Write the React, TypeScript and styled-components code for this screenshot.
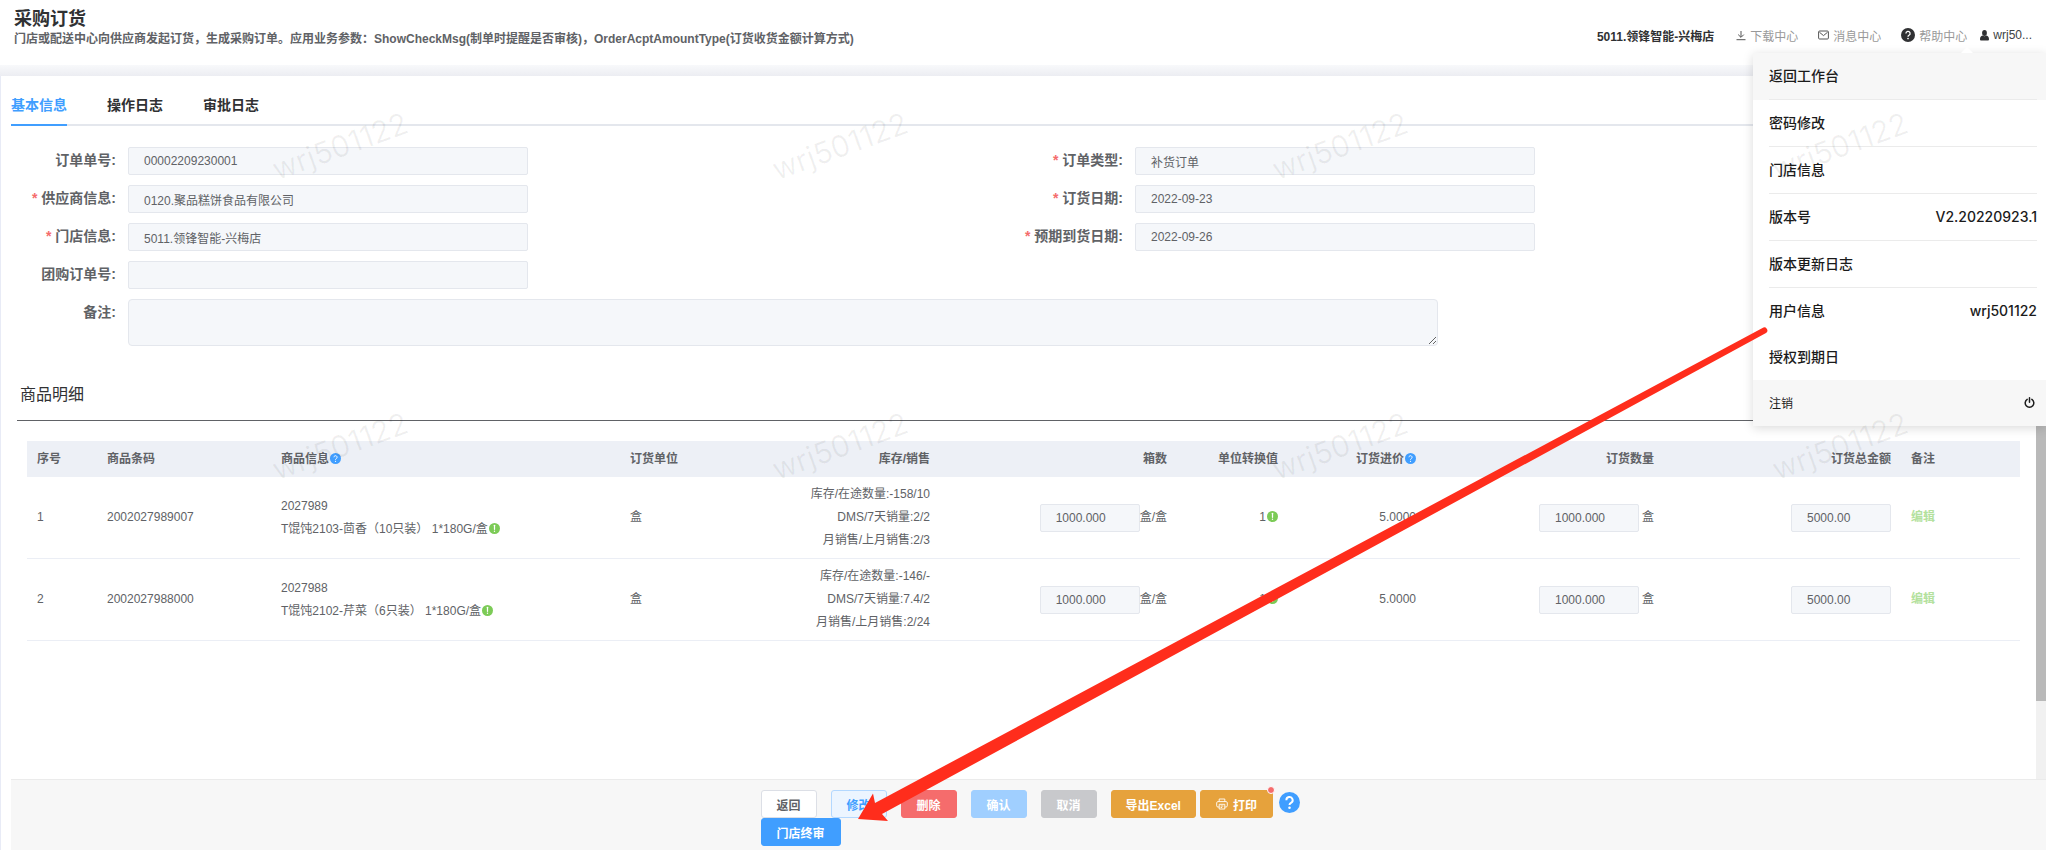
import React from "react";
import styled, { createGlobalStyle, css } from "styled-components";

const GlobalStyle = createGlobalStyle`
  *, *::before, *::after { box-sizing: border-box; }
  body {
    margin: 0;
    background: #fff;
    color: #606266;
    font-family: "Liberation Sans", "Noto Sans CJK SC", sans-serif;
    font-size: 12px;
  }
  button, input, textarea { font-family: inherit; }
`;

/* ---------- page frame ---------- */

const Page = styled.div`
  position: relative;
  display: flex;
  flex-direction: column;
  min-height: 100vh;
  overflow: hidden;
`;

const Header = styled.header`
  position: relative;
  display: flex;
  justify-content: space-between;
  align-items: flex-start;
  height: 65px;
  padding: 8px 14px 0;
`;

const PageTitle = styled.h1`
  margin: 0;
  font-size: 18px;
  line-height: 22px;
  color: #303133;
`;

const PageHint = styled.p`
  margin: 0;
  font-weight: bold;
  line-height: 18px;
`;

const HeaderLinks = styled.nav`
  display: flex;
  align-items: center;
  height: 54px;
`;

const StoreName = styled.span`
  margin-right: 22px;
  font-weight: bold;
  color: #303133;
`;

const HeaderLink = styled.a<{ $strong?: boolean; $after: number }>`
  display: flex;
  align-items: center;
  gap: 4px;
  margin-right: ${(p) => p.$after}px;
  color: ${(p) => (p.$strong ? "#404244" : "#999")};
  text-decoration: none;
`;

const ShadowBand = styled.div`
  height: 11px;
  background: linear-gradient(#f8f9fb, #ecedf2);
`;

const Panel = styled.main`
  display: flex;
  flex: 1;
  flex-direction: column;
  border-left: 1px solid #e8ebf6;
`;

const ScrollArea = styled.div`
  display: flex;
  flex: 1;
`;

const Content = styled.div`
  flex: 1;
  min-width: 0;
  padding: 10px 11px 0 10px;
`;

const ScrollTrack = styled.div`
  width: 10px;
  background: #f1f1f1;
`;

const ScrollThumb = styled.div`
  height: 625px;
  background: #b9b9b9;
`;

/* ---------- tabs ---------- */

const Tabs = styled.div`
  display: flex;
  gap: 40px;
  height: 40px;
  box-shadow: inset 0 -2px #e4e7ed;
`;

const Tab = styled.button<{ $active?: boolean }>`
  padding: 0;
  border: 0;
  border-bottom: 2px solid ${(p) => (p.$active ? "#409eff" : "transparent")};
  background: none;
  color: ${(p) => (p.$active ? "#409eff" : "#303133")};
  font-size: 14px;
  font-weight: bold;
  line-height: 38px;
`;

/* ---------- form ---------- */

const Form = styled.form`
  display: grid;
  grid-template-columns: 1fr 1fr;
  gap: 10px 0;
  margin-top: 21px;
`;

const FieldRow = styled.div<{ $column?: number; $wide?: boolean }>`
  display: flex;
  grid-column: ${(p) => (p.$wide ? "1 / -1" : p.$column)};
`;

const FieldLabel = styled.label<{ $required?: boolean }>`
  flex: none;
  width: 117px;
  padding-right: 12px;
  font-size: 14px;
  font-weight: bold;
  line-height: 26px;
  text-align: right;
  ${(p) =>
    p.$required &&
    css`
      &::before {
        content: "*";
        margin-right: 4px;
        color: #f56c6c;
      }
    `}
`;

const controlLook = css`
  border: 1px solid #e4e7ed;
  background: #f5f7fa;
  color: #606266;
  font-size: 12px;
`;

const TextInput = styled.input<{ $width?: number }>`
  ${controlLook}
  width: ${(p) => p.$width ?? 400}px;
  height: 28px;
  padding: 0 15px;
  border-radius: 2px;
`;

const Remark = styled.textarea`
  ${controlLook}
  display: block;
  width: 1310px;
  height: 47px;
  padding: 5px 15px;
  border-radius: 4px;
  resize: vertical;
`;

/* ---------- goods table ---------- */

const SectionTitle = styled.h2`
  margin: 24px 6px 0;
  padding-left: 3px;
  border-bottom: 1px solid #606266;
  color: #303133;
  font-size: 16px;
  font-weight: normal;
  line-height: 50px;
`;

const GoodsTable = styled.table`
  width: calc(100% - 21px);
  margin: 20px 0 0 16px;
  border-collapse: separate;
  border-spacing: 0;
  table-layout: fixed;
`;

const HeadCell = styled.th<{ $right?: boolean; $width: number }>`
  width: ${(p) => p.$width}px;
  height: 36px;
  padding: 0 10px 4px;
  background: #edf0f6;
  text-align: ${(p) => (p.$right ? "right" : "left")};
  white-space: nowrap;
`;

const Cell = styled.td<{ $right?: boolean }>`
  padding: 6px 10px;
  border-bottom: 1px solid #ebeef5;
  line-height: 23px;
  text-align: ${(p) => (p.$right ? "right" : "left")};
  white-space: nowrap;
`;

const InputWithUnit = styled.div<{ $gap?: number }>`
  display: flex;
  justify-content: flex-end;
  align-items: center;
  gap: ${(p) => p.$gap ?? 0}px;
`;

const StockLine = styled.div`
  height: 23px;
`;

const EditLink = styled.a`
  color: #b3e19d;
  font-weight: bold;
  text-decoration: none;
`;

const InlineIcon = styled.svg`
  width: 11px;
  height: 11px;
  margin-left: 1px;
  vertical-align: -1px;
`;

/* ---------- footer ---------- */

const Footer = styled.footer`
  margin-left: 10px;
  padding: 10px 0 4px 6px;
  border-top: 1px solid #ebebeb;
  background: #f7f7f7;
`;

const ButtonGroup = styled.div`
  display: flex;
  flex-wrap: wrap;
  column-gap: 14px;
  width: 542px;
  margin: 0 auto;
`;

const ExportGroup = styled.div`
  display: flex;
  gap: 4px;
`;

type Tone = "plain" | "light" | "danger" | "disabledBlue" | "disabledGrey" | "warning" | "primary";

const tones: Record<Tone, [string, string, string]> = {
  plain: ["#fff", "#dcdfe6", "#606266"],
  light: ["#ecf5ff", "#b3d8ff", "#409eff"],
  danger: ["#f56c6c", "#f56c6c", "#fff"],
  disabledBlue: ["#a0cfff", "#a0cfff", "#fff"],
  disabledGrey: ["#c8c9cc", "#c8c9cc", "#fff"],
  warning: ["#e6a23c", "#e6a23c", "#fff"],
  primary: ["#409eff", "#409eff", "#fff"],
};

const ActionButton = styled.button<{ $tone: Tone }>`
  position: relative;
  display: flex;
  align-items: center;
  gap: 5px;
  height: 28px;
  padding: 0 15px;
  border: 1px solid ${(p) => tones[p.$tone][1]};
  border-radius: 3px;
  background: ${(p) => tones[p.$tone][0]};
  color: ${(p) => tones[p.$tone][2]};
  font-size: 12px;
  font-weight: bold;
  white-space: nowrap;
`;

const ExportButton = styled(ActionButton)`
  padding: 0 14px;
`;

const Dot = styled.span`
  position: absolute;
  top: -5px;
  right: -3px;
  width: 8px;
  height: 8px;
  border: 1px solid #fff;
  border-radius: 50%;
  background: #f56c6c;
`;

const HelpButton = styled.button`
  width: 21px;
  height: 21px;
  margin: 2px 0 0 2px;
  padding: 0;
  border: 0;
  background: none;
`;

/* ---------- user menu ---------- */

const Menu = styled.div`
  position: absolute;
  z-index: 2;
  top: 53px;
  right: 0;
  width: 293px;
  background: #fff;
  box-shadow: 0 2px 10px rgba(0, 0, 0, 0.15);
  color: #1b1b1b;
  font-family: Inter, "Noto Sans CJK SC", sans-serif;

  &::before {
    content: "";
    position: absolute;
    top: -6px;
    left: 208px;
    border: 6px solid transparent;
    border-top: 0;
    border-bottom-color: #fff;
  }
`;

const MenuItem = styled.button<{ $active?: boolean }>`
  display: block;
  width: 100%;
  padding: 0 9px 0 16px;
  border: 0;
  background: ${(p) => (p.$active ? "#f7f7f7" : "none")};
  color: inherit;
  font-size: 14px;
  font-weight: 500;
`;

const MenuLine = styled.span<{ $divided: boolean }>`
  display: flex;
  justify-content: space-between;
  border-bottom: ${(p) => (p.$divided ? "1px solid #ebebeb" : "0")};
  line-height: 46px;
`;

const Logout = styled.button`
  display: flex;
  justify-content: space-between;
  align-items: center;
  width: 100%;
  height: 46px;
  padding: 0 11px 2px 16px;
  border: 0;
  background: #f7f7f7;
  color: inherit;
  font-size: 12px;
`;

/* ---------- overlays ---------- */

const WatermarkLayer = styled.div`
  position: absolute;
  z-index: 3;
  top: -4px;
  left: 90px;
  display: grid;
  grid-template-columns: repeat(4, 500px);
  grid-auto-rows: 300px;
  place-items: center;
  pointer-events: none;
  color: rgba(0, 0, 0, 0.06);
  font-family: Inter, sans-serif;
  font-size: 30px;

  span { transform: rotate(-20deg); }
`;

const Arrow = styled.svg`
  position: absolute;
  z-index: 4;
  top: 320px;
  left: 850px;
  width: 920px;
  height: 510px;
  pointer-events: none;
`;

/* ---------- icons ---------- */

const DownloadIcon = () => (
  <svg width="10" height="11" viewBox="0 0 10 11" fill="none" stroke="#555" strokeWidth="1" aria-hidden="true">
    <path d="M5 1v6M2.2 4.6 5 7.4l2.8-2.8M.5 9.7h9" />
  </svg>
);

const MessageIcon = () => (
  <svg width="11" height="10" viewBox="0 0 11 10" fill="none" stroke="#555" strokeWidth="1" aria-hidden="true">
    <rect x=".6" y="1" width="9.8" height="8" rx="1" />
    <path d="M1.4 2.2 5.5 5.6l4.1-3.4" />
  </svg>
);

const QuestionIcon = ({ size, fill }: { size: number; fill: string }) => (
  <svg width={size} height={size} viewBox="0 0 14 14" aria-hidden="true">
    <circle cx="7" cy="7" r="7" fill={fill} />
    <path d="M4.9 5.5a2.1 2.1 0 1 1 3.1 1.8c-.7.4-1 .7-1 1.4" fill="none" stroke="#fff" strokeWidth="1.3" />
    <circle cx="7" cy="10.5" r=".85" fill="#fff" />
  </svg>
);

const UserIcon = () => (
  <svg width="9" height="11" viewBox="0 0 9 11" fill="#303133" aria-hidden="true">
    <ellipse cx="4.5" cy="3" rx="2.4" ry="2.9" />
    <path d="M0 9.2C0 7 1 6 2.5 5.6c1.2.9 2.8.9 4 0C8 6 9 7 9 9.2c0 .8-.5 1.3-1.2 1.3H1.2C.5 10.5 0 10 0 9.2z" />
  </svg>
);

const PowerIcon = () => (
  <svg width="11" height="11" viewBox="0 0 11 11" fill="none" stroke="#1b1b1b" strokeWidth="1.5" strokeLinecap="round" aria-hidden="true">
    <path d="M3.2 2.3a4.3 4.3 0 1 0 4.6 0M5.5.8v4.4" />
  </svg>
);

const PrinterIcon = () => (
  <svg width="12" height="12" viewBox="0 0 12 12" fill="none" stroke="#fff" strokeWidth=".9" aria-hidden="true">
    <path d="M3.2 3.6V1h5.6v2.6M3.2 9H1.9A1.2 1.2 0 0 1 .7 7.8v-3c0-.7.5-1.2 1.2-1.2h8.2c.7 0 1.2.5 1.2 1.2v3c0 .7-.5 1.2-1.2 1.2H8.8" />
    <path d="M3.2 6.3h5.6V11H3.2zM4.6 8h2.8M4.6 9.5h1.6" />
  </svg>
);

const HelpMark = () => (
  <InlineIcon viewBox="0 0 14 14" aria-hidden="true">
    <circle cx="7" cy="7" r="7" fill="#409eff" />
    <path d="M5 5.4a2 2 0 1 1 3 1.8c-.7.4-1 .7-1 1.4" fill="none" stroke="#fff" strokeWidth="1.2" />
    <circle cx="7" cy="10.6" r=".8" fill="#fff" />
  </InlineIcon>
);

const InfoMark = () => (
  <InlineIcon viewBox="0 0 14 14" aria-hidden="true">
    <circle cx="7" cy="7" r="7" fill="#7ccb57" />
    <path d="M7 3v5" stroke="#fff" strokeWidth="1.6" strokeLinecap="round" />
    <circle cx="7" cy="10.6" r=".9" fill="#fff" />
  </InlineIcon>
);

/* ---------- data ---------- */

interface Field {
  id: string;
  label: string;
  value: string;
  column: number;
  required?: boolean;
}

const fields: Field[] = [
  { id: "orderNo", label: "订单单号:", value: "00002209230001", column: 1 },
  { id: "orderType", label: "订单类型:", value: "补货订单", column: 2, required: true },
  { id: "supplier", label: "供应商信息:", value: "0120.聚品糕饼食品有限公司", column: 1, required: true },
  { id: "orderDate", label: "订货日期:", value: "2022-09-23", column: 2, required: true },
  { id: "store", label: "门店信息:", value: "5011.领锋智能-兴梅店", column: 1, required: true },
  { id: "arrivalDate", label: "预期到货日期:", value: "2022-09-26", column: 2, required: true },
  { id: "groupNo", label: "团购订单号:", value: "", column: 1 },
];

const columns: { title: string; width: number; right?: boolean; help?: boolean }[] = [
  { title: "序号", width: 70 },
  { title: "商品条码", width: 174 },
  { title: "商品信息", width: 349, help: true },
  { title: "订货单位", width: 160 },
  { title: "库存/销售", width: 160, right: true },
  { title: "箱数", width: 237, right: true },
  { title: "单位转换值", width: 111, right: true },
  { title: "订货进价", width: 138, right: true, help: true },
  { title: "订货数量", width: 238, right: true },
  { title: "订货总金额", width: 237, right: true },
  { title: "备注", width: 119 },
];

const goods = [
  {
    barcode: "2002027989007",
    code: "2027989",
    name: "T馄饨2103-茴香（10只装） 1*180G/盒",
    stock: ["库存/在途数量:-158/10", "DMS/7天销量:2/2", "月销售/上月销售:2/3"],
  },
  {
    barcode: "2002027988000",
    code: "2027988",
    name: "T馄饨2102-芹菜（6只装） 1*180G/盒",
    stock: ["库存/在途数量:-146/-", "DMS/7天销量:7.4/2", "月销售/上月销售:2/24"],
  },
];

const menuItems: { label: string; value?: string; divided: boolean }[] = [
  { label: "返回工作台", divided: true },
  { label: "密码修改", divided: true },
  { label: "门店信息", divided: true },
  { label: "版本号", value: "V2.20220923.1", divided: true },
  { label: "版本更新日志", divided: true },
  { label: "用户信息", value: "wrj501122", divided: false },
  { label: "授权到期日", divided: false },
];

const simpleActions: { label: string; tone: Tone }[] = [
  { label: "返回", tone: "plain" },
  { label: "修改", tone: "light" },
  { label: "删除", tone: "danger" },
  { label: "确认", tone: "disabledBlue" },
  { label: "取消", tone: "disabledGrey" },
];

export default function App() {
  return (
    <Page>
      <GlobalStyle />
      <Header>
        <div>
          <PageTitle>采购订货</PageTitle>
          <PageHint>
            门店或配送中心向供应商发起订货，生成采购订单。应用业务参数：ShowCheckMsg(制单时提醒是否审核)，OrderAcptAmountType(订货收货金额计算方式)
          </PageHint>
        </div>
        <HeaderLinks>
          <StoreName>5011.领锋智能-兴梅店</StoreName>
          <HeaderLink href="#download" $after={20}><DownloadIcon />下载中心</HeaderLink>
          <HeaderLink href="#messages" $after={20}><MessageIcon />消息中心</HeaderLink>
          <HeaderLink href="#help" $after={13}><QuestionIcon size={14} fill="#303133" />帮助中心</HeaderLink>
          <HeaderLink href="#user" $after={0} $strong><UserIcon />wrj50...</HeaderLink>
        </HeaderLinks>
        <Menu>
          {menuItems.map((item, i) => (
            <MenuItem key={item.label} type="button" $active={i === 0}>
              <MenuLine $divided={item.divided}>
                {item.label}
                {item.value && <span>{item.value}</span>}
              </MenuLine>
            </MenuItem>
          ))}
          <Logout type="button">注销<PowerIcon /></Logout>
        </Menu>
      </Header>
      <ShadowBand />
      <Panel>
        <ScrollArea>
          <Content>
            <Tabs role="tablist">
              <Tab type="button" role="tab" $active>基本信息</Tab>
              <Tab type="button" role="tab">操作日志</Tab>
              <Tab type="button" role="tab">审批日志</Tab>
            </Tabs>
            <Form>
              {fields.map((f) => (
                <FieldRow key={f.id} $column={f.column}>
                  <FieldLabel htmlFor={f.id} $required={f.required}>{f.label}</FieldLabel>
                  <TextInput id={f.id} defaultValue={f.value} readOnly />
                </FieldRow>
              ))}
              <FieldRow $wide>
                <FieldLabel htmlFor="remark">备注:</FieldLabel>
                <Remark id="remark" readOnly />
              </FieldRow>
            </Form>
            <SectionTitle>商品明细</SectionTitle>
            <GoodsTable>
              <thead>
                <tr>
                  {columns.map((c) => (
                    <HeadCell key={c.title} $width={c.width} $right={c.right}>
                      {c.title}
                      {c.help && <HelpMark />}
                    </HeadCell>
                  ))}
                </tr>
              </thead>
              <tbody>
                {goods.map((g, i) => (
                  <tr key={g.code}>
                    <Cell>{i + 1}</Cell>
                    <Cell>{g.barcode}</Cell>
                    <Cell>
                      <div>{g.code}</div>
                      <div>{g.name}<InfoMark /></div>
                    </Cell>
                    <Cell>盒</Cell>
                    <Cell $right>
                      {g.stock.map((line) => <StockLine key={line}>{line}</StockLine>)}
                    </Cell>
                    <Cell $right>
                      <InputWithUnit>
                        <TextInput $width={100} aria-label="箱数" defaultValue="1000.000" readOnly />
                        盒/盒
                      </InputWithUnit>
                    </Cell>
                    <Cell $right>1<InfoMark /></Cell>
                    <Cell $right>5.0000</Cell>
                    <Cell $right>
                      <InputWithUnit $gap={3}>
                        <TextInput $width={100} aria-label="订货数量" defaultValue="1000.000" readOnly />
                        盒
                      </InputWithUnit>
                    </Cell>
                    <Cell $right>
                      <InputWithUnit>
                        <TextInput $width={100} aria-label="订货总金额" defaultValue="5000.00" readOnly />
                      </InputWithUnit>
                    </Cell>
                    <Cell><EditLink href="#edit">编辑</EditLink></Cell>
                  </tr>
                ))}
              </tbody>
            </GoodsTable>
          </Content>
          <ScrollTrack aria-hidden="true"><ScrollThumb /></ScrollTrack>
        </ScrollArea>
        <Footer>
          <ButtonGroup>
            {simpleActions.map((a) => (
              <ActionButton key={a.label} type="button" $tone={a.tone}>{a.label}</ActionButton>
            ))}
            <ExportGroup>
              <ExportButton type="button" $tone="warning">导出Excel</ExportButton>
              <ActionButton type="button" $tone="warning"><PrinterIcon />打印<Dot /></ActionButton>
              <HelpButton type="button" aria-label="帮助"><QuestionIcon size={21} fill="#409eff" /></HelpButton>
            </ExportGroup>
            <ActionButton type="button" $tone="primary">门店终审</ActionButton>
          </ButtonGroup>
        </Footer>
      </Panel>
      <WatermarkLayer aria-hidden="true">
        {Array.from({ length: 8 }, (_, i) => <span key={i}>wrj501122</span>)}
      </WatermarkLayer>
      <Arrow viewBox="850 320 920 510" aria-hidden="true">
        <path
          d="M858 819 873 793.500 875 803 1762.500 328a2.700 2.700 0 0 1 3.500 5L882 814 888 821z"
          fill="#ff2d1c"
        />
      </Arrow>
    </Page>
  );
}
